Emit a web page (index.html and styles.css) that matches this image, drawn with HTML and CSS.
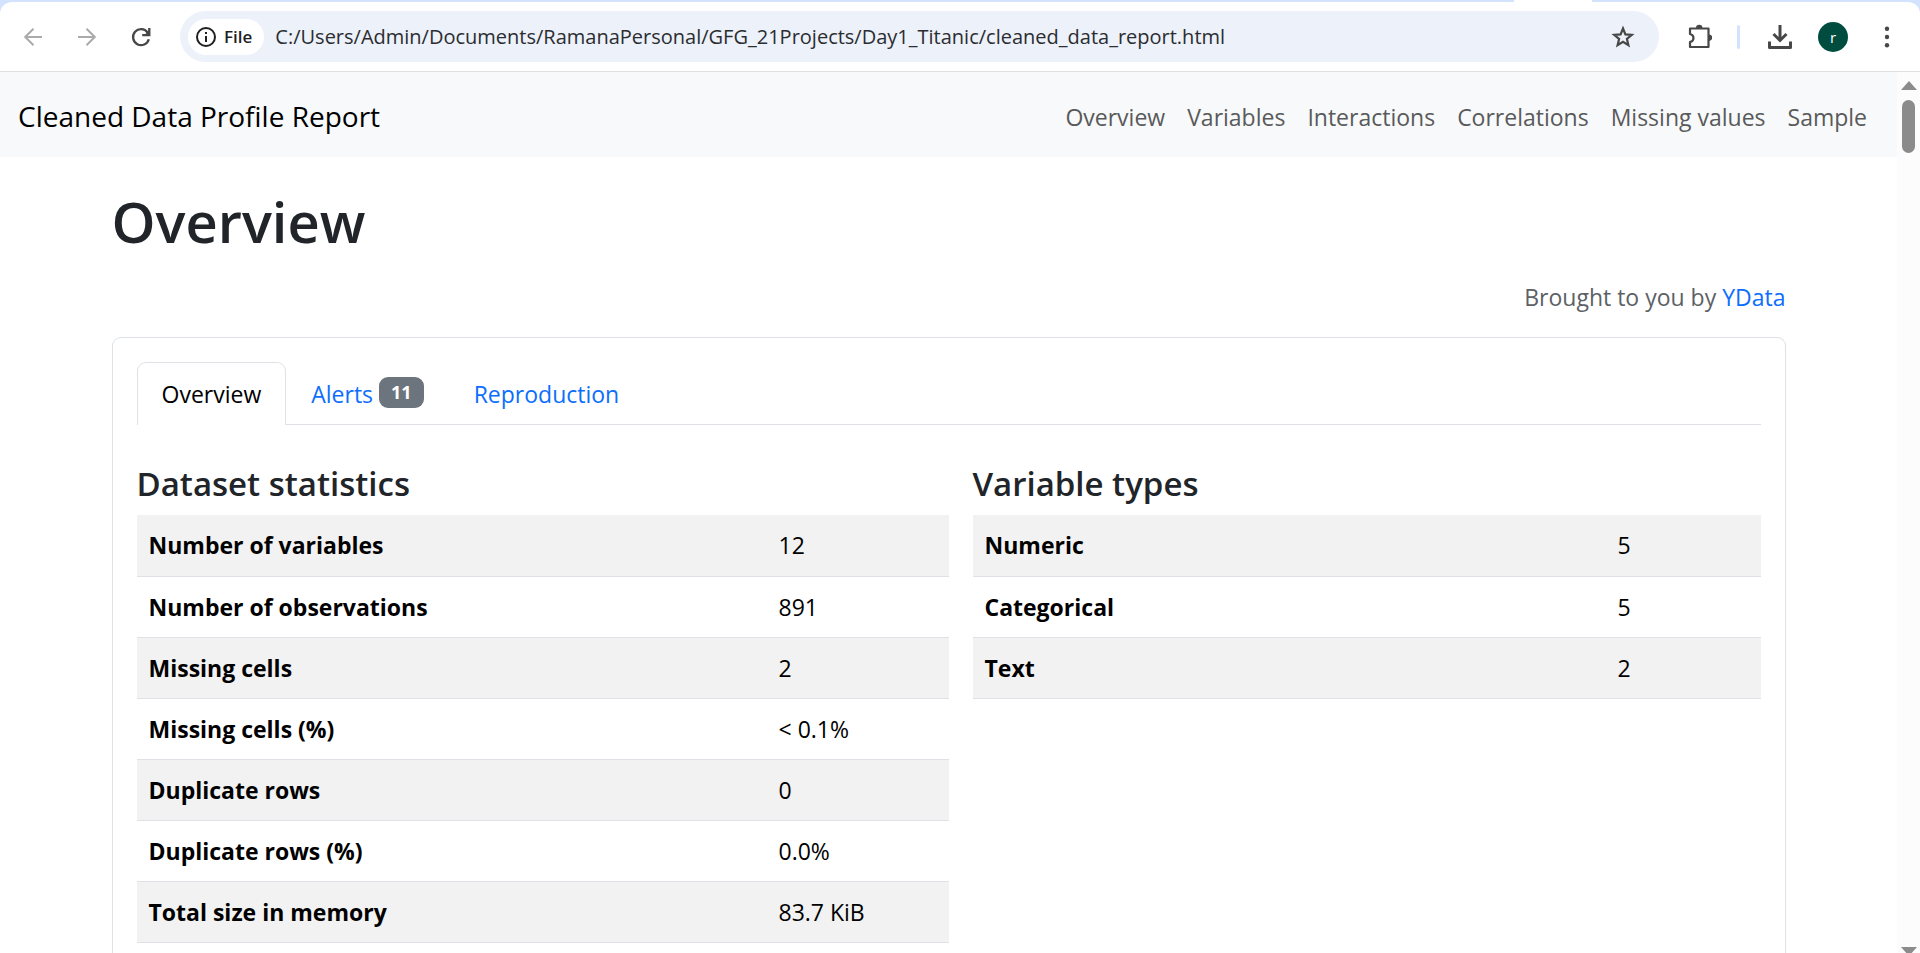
FILE: index.html
```html
<!DOCTYPE html>
<html lang="en">
<head>
<meta charset="utf-8">
<title>Cleaned Data Profile Report</title>
<link rel="stylesheet" href="styles.css">
</head>
<body>
<div class="strip"><span class="strip-tab"></span></div>
<header class="toolbar">
  <div class="toolbar-nav">
    <button class="tool tool-off" aria-label="Back"><svg width="24" height="24" viewBox="0 0 24 24" fill="none" stroke="currentColor" stroke-width="2"><path d="M21 12H4.500M12.500 3.700 4.200 12l8.300 8.300"/></svg></button>
    <button class="tool tool-off" aria-label="Forward"><svg width="24" height="24" viewBox="0 0 24 24" fill="none" stroke="currentColor" stroke-width="2"><path d="M3 12h16.500M11.500 3.700l8.300 8.300-8.300 8.300"/></svg></button>
    <button class="tool" aria-label="Reload"><svg width="24" height="24" viewBox="0 0 24 24" fill="none" stroke="currentColor" stroke-width="2.300"><path d="M19.800 14.200A8 8 0 1 1 18.600 7.500L20 9.300"/><path d="M20.300 3v7.200H13.200" /><path d="M20.300 5v5.200h-5z" fill="currentColor" stroke="none"/></svg></button>
  </div>
  <div class="address">
    <button class="chip"><svg width="22" height="22" viewBox="0 0 22 22" fill="none" stroke="currentColor" stroke-width="2"><circle cx="11" cy="11" r="9"/><path d="M11 10v6M11 6v2"/></svg>File</button>
    <input class="url" type="text" aria-label="Address" value="C:/Users/Admin/Documents/RamanaPersonal/GFG_21Projects/Day1_Titanic/cleaned_data_report.html">
    <button class="tool" aria-label="Bookmark"><svg width="26" height="26" viewBox="0 0 26 26" fill="none" stroke="currentColor" stroke-width="2.200"><path d="M13 4.500l2.400 5.900 6.400.5-4.900 4.100 1.500 6.200-5.400-3.300-5.400 3.300 1.500-6.200-4.900-4.100 6.400-.5z"/></svg></button>
  </div>
  <button class="tool" aria-label="Extensions"><svg width="28" height="28" viewBox="0 0 28 28" fill="none" stroke="currentColor" stroke-width="2.200"><path d="M6 5.500h18.500v18.500H6v-5q3.500-.8 3.500-4T6 11z" stroke-linejoin="round"/><path d="M12 5a3.200 3.200 0 0 1 6.400 0zM25 11.500a3.200 3.200 0 0 1 0 6.400z" fill="currentColor" stroke="none"/></svg></button>
  <span class="divider"></span>
  <button class="tool" aria-label="Downloads"><svg width="28" height="28" viewBox="0 0 28 28" fill="none" stroke="currentColor" stroke-width="3"><path d="M15 2v15M8.500 11l6.500 6.500 6.500-6.500"/><path d="M4.500 18.500v6h21v-6" stroke-linejoin="round"/></svg></button>
  <button class="avatar" aria-label="Profile">r</button>
  <button class="tool" aria-label="Menu"><svg width="24" height="24" viewBox="0 0 24 24" fill="currentColor"><circle cx="12" cy="3.800" r="2.200"/><circle cx="12" cy="12" r="2.200"/><circle cx="12" cy="20.200" r="2.200"/></svg></button>
</header>
<div class="view">
  <div class="page">
    <nav class="navbar">
      <a class="brand" href="#top">Cleaned Data Profile Report</a>
      <div class="nav-links">
        <a href="#overview">Overview</a>
        <a href="#variables">Variables</a>
        <a href="#interactions">Interactions</a>
        <a href="#correlations">Correlations</a>
        <a href="#missing">Missing values</a>
        <a href="#sample">Sample</a>
      </div>
    </nav>
    <main class="container">
      <h1 class="title">Overview</h1>
      <p class="credit">Brought to you by <a href="#ydata">YData</a></p>
      <section class="card">
        <div class="tabs" role="tablist">
          <button class="tab tab-active" role="tab" aria-selected="true">Overview</button>
          <button class="tab" role="tab">Alerts <span class="badge">11</span></button>
          <button class="tab" role="tab">Reproduction</button>
        </div>
        <div class="columns">
          <div class="column">
            <h2 class="subtitle">Dataset statistics</h2>
            <table class="stats">
              <tbody>
                <tr><th scope="row">Number of variables</th><td>12</td></tr>
                <tr><th scope="row">Number of observations</th><td>891</td></tr>
                <tr><th scope="row">Missing cells</th><td>2</td></tr>
                <tr><th scope="row">Missing cells (%)</th><td>&lt; 0.1%</td></tr>
                <tr><th scope="row">Duplicate rows</th><td>0</td></tr>
                <tr><th scope="row">Duplicate rows (%)</th><td>0.0%</td></tr>
                <tr><th scope="row">Total size in memory</th><td>83.7 KiB</td></tr>
              </tbody>
            </table>
          </div>
          <div class="column">
            <h2 class="subtitle">Variable types</h2>
            <table class="stats types">
              <tbody>
                <tr><th scope="row">Numeric</th><td>5</td></tr>
                <tr><th scope="row">Categorical</th><td>5</td></tr>
                <tr><th scope="row">Text</th><td>2</td></tr>
              </tbody>
            </table>
          </div>
        </div>
      </section>
    </main>
  </div>
  <div class="scrollbar" aria-hidden="true">
    <svg width="16" height="9" viewBox="0 0 16 9"><path d="M8 0l8 9H0z" fill="#8b8b8b"/></svg>
    <span class="thumb"></span>
    <svg class="arrow-down" width="16" height="6" viewBox="0 0 16 6"><path d="M0 0h16l-5.300 6H5.300z" fill="#8b8b8b"/></svg>
  </div>
</div>
</body>
</html>
```
FILE: styles.css
```css
* {
  box-sizing: border-box;
}

body {
  margin: 0;
  height: 100vh;
  display: flex;
  flex-direction: column;
  overflow: hidden;
  background: #d3e3fd;
  color: #212529;
  font: 23px/36px "Segoe UI", "Open Sans", "Noto Sans", sans-serif;
}

button,
input {
  border: 0;
  padding: 0;
  background: none;
  font: inherit;
  color: inherit;
}

a {
  color: #0d6efd;
  text-decoration: none;
}

/* Browser toolbar */
.strip {
  flex: none;
  height: 2px;
  display: flex;
  justify-content: flex-end;
  padding-right: 328px;
}

.strip-tab {
  width: 78px;
  background: #fff;
}

.toolbar {
  flex: none;
  height: 70px;
  display: flex;
  align-items: center;
  gap: 18px;
  padding: 0 12px;
  background: #fff;
  border-bottom: 1px solid #dfe1e1;
  border-radius: 12px 12px 0 0;
  color: #474747;
}

.toolbar-nav {
  display: flex;
  gap: 12px;
}

.tool {
  width: 42px;
  height: 42px;
  display: flex;
  align-items: center;
  justify-content: center;
}

.tool-off {
  color: #ababab;
}

.address {
  flex: 1;
  height: 51px;
  display: flex;
  align-items: center;
  padding: 0 15px 0 8px;
  border-radius: 26px;
  background: #ecf1fa;
}

.chip {
  height: 36px;
  display: flex;
  align-items: center;
  gap: 7px;
  padding: 0 12px 0 7px;
  border-radius: 18px;
  background: #fff;
  color: #1f1f1f;
  font-size: 17px;
  font-weight: 600;
}

.url {
  flex: 1;
  min-width: 0;
  margin-left: 11px;
  color: #2b2d30;
  font-size: 20px;
}

.divider {
  width: 3px;
  height: 24px;
  border-radius: 2px;
  background: #d3e3fd;
}

.avatar {
  width: 30px;
  height: 30px;
  border-radius: 50%;
  background: #004d40;
  color: #fff;
  font-size: 15px;
  line-height: 28px;
}

/* Page area */
.view {
  flex: 1;
  min-height: 0;
  display: flex;
  background: #fff;
}

.page {
  flex: 1;
  display: flex;
  flex-direction: column;
  overflow: hidden;
}

.navbar {
  flex: none;
  display: flex;
  align-items: center;
  justify-content: space-between;
  padding: 22px 30px 18px 18px;
  background: #f8f9fa;
}

.brand {
  color: #000;
  font-size: 28px;
  line-height: 45px;
}

.nav-links {
  display: flex;
  gap: 22px;
}

.nav-links a {
  color: #595a5b;
}

.container {
  flex: 1;
  width: 100%;
  max-width: 1710px;
  margin: 0 auto;
  padding: 28px 18px 0;
  display: flex;
  flex-direction: column;
}

.title {
  margin: 0 0 22px;
  font-size: 56px;
  font-weight: 600;
  line-height: 72px;
}

.credit {
  margin: 0 0 22px;
  color: #5c6166;
  text-align: right;
}

.card {
  flex: 1;
  padding: 24px;
  border: 1px solid #dee2e6;
  border-bottom: 0;
  border-radius: 9px 9px 0 0;
}

.tabs {
  display: flex;
  border-bottom: 1px solid #dee2e6;
}

.tab {
  display: flex;
  align-items: center;
  gap: 6px;
  padding: 12px 24px;
  margin-bottom: -1px;
  border: 1px solid transparent;
  border-bottom: 0;
  border-radius: 9px 9px 0 0;
  color: #0d6efd;
  height: 63px;
}

.tab-active {
  border-color: #dee2e6;
  background: #fff;
  color: #000;
}

.badge {
  height: 31px;
  margin-bottom: 4px;
  padding: 0 12px;
  border-radius: 9px;
  background: #6c757d;
  color: #fff;
  font-size: 18px;
  font-weight: 700;
  line-height: 30px;
}

.columns {
  display: grid;
  grid-template-columns: 812fr 788fr;
  gap: 24px;
  padding-top: 36px;
}

.subtitle {
  margin: 0 0 9px;
  font-size: 33px;
  font-weight: 600;
  line-height: 45px;
}

.stats {
  width: 100%;
  table-layout: fixed;
  border-collapse: collapse;
  color: #000;
}

.stats th,
.stats td {
  height: 61px;
  padding: 12px;
  border-bottom: 1px solid #dee2e6;
  text-align: left;
}

.stats th {
  font-weight: 700;
}

.stats td {
  width: 182px;
}

.types td {
  width: 155px;
}

.stats tr:nth-child(odd) {
  background: #f2f2f2;
}

/* Scrollbar */
.scrollbar {
  flex: none;
  width: 23px;
  display: flex;
  flex-direction: column;
  align-items: center;
  padding-top: 9px;
  background: #fcfcfc;
}

.thumb {
  width: 13px;
  height: 53px;
  margin-top: 10px;
  border-radius: 7px;
  background: #8b8b8b;
}

.arrow-down {
  margin-top: auto;
}
```
